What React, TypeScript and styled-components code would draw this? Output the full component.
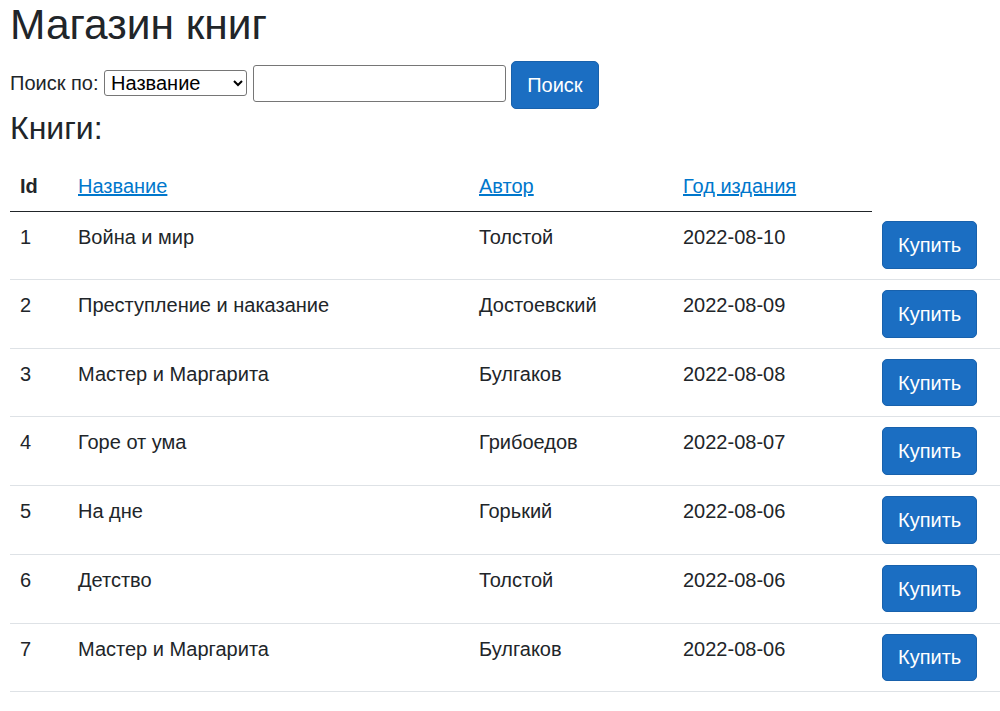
import React from "react";
import styled, { createGlobalStyle } from "styled-components";

const GlobalStyle = createGlobalStyle`
  html, body { margin: 0; padding: 0; background: #fff; }
  body {
    font-family: "Liberation Sans", Arial, sans-serif;
    font-size: 20px;
    line-height: 30px;
    color: #212529;
  }
  * { box-sizing: border-box; }
`;

const Page = styled.div`
  padding-left: 10px;
`;

const Title = styled.h1`
  margin: -1px 0 11px;
  font-size: 42.5px;
  line-height: 51px;
  font-weight: 400;
`;

const SearchForm = styled.form`
  margin: 0;
  line-height: 30px;
`;

const Select = styled.select`
  width: 143px;
  height: 26px;
  font-family: "Liberation Sans", Arial, sans-serif;
  font-size: 20px;
  color: #000;
  border: 1px solid #767676;
  border-radius: 3px;
  background: #fff;
  padding: 0 0 0 2px;
`;

const TextInput = styled.input`
  width: 253px;
  height: 37px;
  font-family: "Liberation Sans", Arial, sans-serif;
  font-size: 20px;
  line-height: 30px;
  padding: 1px 3px;
  border: 1px solid #767676;
  border-radius: 3px;
  vertical-align: baseline;
`;

const Button = styled.button`
  display: inline-block;
  height: 47.5px;
  padding: 0 15px;
  font-family: "Liberation Sans", Arial, sans-serif;
  font-size: 20px;
  line-height: 30px;
  color: #fff;
  background-color: #1b6ec2;
  border: 1px solid #1861ac;
  border-radius: 5px;
  vertical-align: middle;
  cursor: pointer;
`;

const Subtitle = styled.h3`
  margin: 0 0 14px;
  font-size: 32px;
  line-height: 38.4px;
  font-weight: 400;
`;

const Table = styled.table`
  width: 990px;
  border-collapse: collapse;
  table-layout: fixed;
`;

const Th = styled.th<{ $bold?: boolean }>`
  text-align: left;
  padding: 10px;
  font-weight: ${(p) => (p.$bold ? 700 : 400)};
  border-bottom: 1px solid #212529;
  vertical-align: bottom;
`;

const HeadLink = styled.a`
  color: #0077cc;
  text-decoration: underline;
`;

const Row = styled.tr`
  border-bottom: 1px solid #dee2e6;
`;

const Td = styled.td`
  padding: 10px 10px 10.2px;
  vertical-align: top;
`;

const books = [
  [1, "Война и мир", "Толстой", "2022-08-10"],
  [2, "Преступление и наказание", "Достоевский", "2022-08-09"],
  [3, "Мастер и Маргарита", "Булгаков", "2022-08-08"],
  [4, "Горе от ума", "Грибоедов", "2022-08-07"],
  [5, "На дне", "Горький", "2022-08-06"],
  [6, "Детство", "Толстой", "2022-08-06"],
  [7, "Мастер и Маргарита", "Булгаков", "2022-08-06"],
] as const;

export default function App() {
  return (
    <Page>
      <GlobalStyle />
      <Title>Магазин книг</Title>
      <SearchForm onSubmit={(e) => e.preventDefault()}>
        Поиск по:{" "}
        <Select defaultValue="name">
          <option value="name">Название</option>
          <option value="author">Автор</option>
        </Select>{" "}
        <TextInput type="text" />{" "}
        <Button type="submit">Поиск</Button>
      </SearchForm>
      <Subtitle>Книги:</Subtitle>
      <Table>
        <colgroup>
          <col style={{ width: 58 }} />
          <col style={{ width: 401 }} />
          <col style={{ width: 204 }} />
          <col style={{ width: 199 }} />
          <col style={{ width: 128 }} />
        </colgroup>
        <thead>
          <tr>
            <Th $bold>Id</Th>
            <Th>
              <HeadLink href="#">Название</HeadLink>
            </Th>
            <Th>
              <HeadLink href="#">Автор</HeadLink>
            </Th>
            <Th>
              <HeadLink href="#">Год издания</HeadLink>
            </Th>
          </tr>
        </thead>
        <tbody>
          {books.map(([id, name, author, date]) => (
            <Row key={id}>
              <Td>{id}</Td>
              <Td>{name}</Td>
              <Td>{author}</Td>
              <Td>{date}</Td>
              <Td>
                <Button type="button">Купить</Button>
              </Td>
            </Row>
          ))}
        </tbody>
      </Table>
    </Page>
  );
}
